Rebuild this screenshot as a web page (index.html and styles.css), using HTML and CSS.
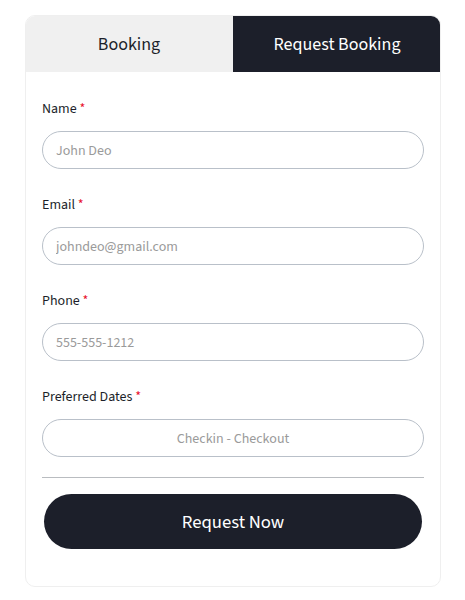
FILE: index.html
```html
<!DOCTYPE html>
<html>
<head>
<meta charset="utf-8">
<link rel="stylesheet" href="styles.css">
</head>
<body>
<div class="card">
  <div class="tabs">
    <div class="tab tab-light">Booking</div>
    <div class="tab tab-dark">Request Booking</div>
  </div>
  <form class="form">
    <div class="field">
      <label class="label">Name <span class="req">*</span></label>
      <input class="input" type="text" placeholder="John Deo">
    </div>
    <div class="field">
      <label class="label">Email <span class="req">*</span></label>
      <input class="input" type="text" placeholder="johndeo@gmail.com">
    </div>
    <div class="field">
      <label class="label">Phone <span class="req">*</span></label>
      <input class="input" type="text" placeholder="555-555-1212">
    </div>
    <div class="field">
      <label class="label">Preferred Dates <span class="req">*</span></label>
      <input class="input input-center" type="text" placeholder="Checkin - Checkout">
    </div>
    <hr class="divider">
    <button class="btn" type="button">Request Now</button>
  </form>
</div>
</body>
</html>
```

FILE: styles.css
```css
* { box-sizing: border-box; }
body {
  margin: 0;
  padding: 15px 24px 0 25px;
  background: #fff;
  font-family: "Source Sans Pro", "Source Sans 3", Lato, "Noto Sans", sans-serif;
}
.card {
  width: 416px;
  height: 572px;
  border: 1px solid #efefef;
  border-radius: 10px;
  overflow: hidden;
  background: #fff;
}
.tabs {
  display: grid;
  grid-template-columns: 208px 208px;
  height: 57px;
  margin: -1px -1px 0 -1px;
}
.tab {
  display: flex;
  align-items: center;
  justify-content: center;
  font-size: 18px;
  padding-top: 1px;
}
.tab-light { background: #f0f0f0; color: #1c1f2a; }
.tab-dark { background: #1c1f2a; color: #fff; }
.form {
  padding: 26px 16px 0 16px;
  display: flex;
  flex-direction: column;
}
.field {
  display: flex;
  flex-direction: column;
  margin-bottom: 25px;
}
.field:nth-child(4) { margin-bottom: 0; }
.label {
  font-size: 14px;
  line-height: 20px;
  color: #1c1f2a;
  padding-top: 1px;
  margin-bottom: 12px;
}
.req { color: #e8112d; }
.input {
  height: 38px;
  border: 1px solid #b9c0c9;
  border-radius: 19px;
  padding: 2px 13px 0 13px;
  font-family: inherit;
  font-size: 14px;
  color: #333;
  outline: none;
}
.input::placeholder { color: #9a9a9a; }
.input-center { text-align: center; }
.divider {
  border: none;
  border-top: 1px solid #b9bcc0;
  margin: 20px 0 16px 0;
  height: 0;
}
.btn {
  margin: 0 2px;
  height: 55px;
  border: none;
  border-radius: 28px;
  background: #1c1f2a;
  color: #fff;
  font-family: inherit;
  font-size: 18.7px;
  padding-top: 2px;
}
```
